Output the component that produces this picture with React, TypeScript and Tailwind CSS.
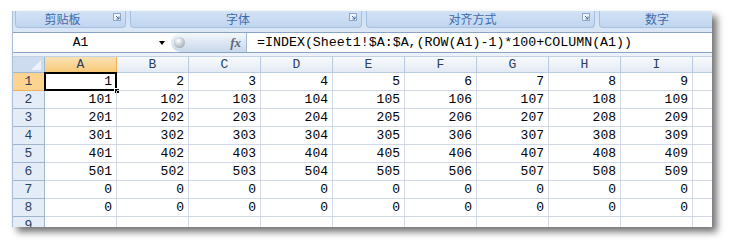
import React from 'react';

const COLS = ['A', 'B', 'C', 'D', 'E', 'F', 'G', 'H', 'I'];
const ROWS = [1, 2, 3, 4, 5, 6, 7, 8, 9];

const GROUPS = [
  { label: '剪贴板', w: 'w-[111px]', launcher: true },
  { label: '字体', w: 'w-[232px]', launcher: true },
  { label: '对齐方式', w: 'w-[229px]', launcher: true },
  { label: '数字', w: 'w-[132px]', launcher: true },
];

const mono = { fontFamily: '"Liberation Mono", "DejaVu Sans Mono", monospace' };

function cellValue(r: number, c: number) {
  if (r > 8) return '';
  if (r > 6) return '0';
  return String((r - 1) * 100 + c);
}

function Launcher() {
  return (
    <svg width="8" height="8" viewBox="0 0 8 8" className="mt-[2px]">
      <rect x="0.5" y="0.5" width="7" height="7" fill="#eef3fa" stroke="#8ea7c8" />
      <path d="M3 3 L6 6 M6 3.5 V6 H3.5" stroke="#4a6a95" strokeWidth="1" fill="none" />
    </svg>
  );
}

export default function App() {
  return (
    <div className="w-[731px] h-[247px] bg-white pl-[12px] pt-[11px]">
      <div className="w-[700px] h-[216px] overflow-hidden flex flex-col bg-[#d4e3f4] border-l border-[#a9bfdb] shadow-[5px_5px_7px_rgba(0,0,0,0.55)]">
        {/* ribbon group labels */}
        <div className="h-[21px] flex gap-[4px] pl-[2px] shrink-0 bg-gradient-to-b from-[#cfe0f4] to-[#dbe7f5]">
          {GROUPS.map((g) => (
            <div
              key={g.label}
              className={`${g.w} h-[17px] shrink-0 flex rounded-b-[4px] border-x border-b border-[#a6c0e0] bg-gradient-to-b from-[#d3e3f6] to-[#c0d5ef]`}
            >
              <span
                className="flex-1 text-center text-[12px] leading-[16px] text-[#3e6aaa]"
                style={{ fontFamily: '"Noto Sans CJK SC", sans-serif' }}
              >
                {g.label}
              </span>
              <span className="w-[16px] flex justify-center">{g.label !== '数字' && <Launcher />}</span>
            </div>
          ))}
        </div>

        {/* formula bar */}
        <div className="h-[21px] shrink-0 flex bg-white border-y border-[#8aa4c8]">
          <div className="w-[158px] flex items-center shrink-0">
            <span className="w-[135px] text-center text-[13px] text-black" style={mono}>
              A1
            </span>
            <span className="ml-[11px] w-0 h-0 border-l-[3.5px] border-r-[3.5px] border-t-[4px] border-l-transparent border-r-transparent border-t-black" />
          </div>
          <div className="w-[76px] shrink-0 flex items-center justify-between rounded-l-full border-r border-[#a3b8d4] bg-gradient-to-b from-[#f4f8fc] via-[#dde7f3] to-[#c8d8ec] pl-[3px] pr-[5px]">
            <span className="w-[11px] h-[11px] rounded-full bg-[radial-gradient(circle_at_40%_35%,#ffffff,#b8bec8_60%,#8e96a3)]" />
            <span
              className="text-[13px] italic font-bold text-[#5d6777] leading-none"
              style={{ fontFamily: '"Liberation Serif", serif' }}
            >
              fx
            </span>
          </div>
          <div className="flex items-center pl-[10px] text-[13.3px] text-black whitespace-nowrap" style={mono}>
            =INDEX(Sheet1!$A:$A,(ROW(A1)-1)*100+COLUMN(A1))
          </div>
        </div>

        <div className="h-[4px] shrink-0 bg-[#eef3f9] border-b border-[#c2d1e4]" />

        {/* sheet grid */}
        <div className="grid grid-cols-[32px_repeat(9,72px)_1fr] grid-rows-[16px_repeat(9,18px)] bg-white" style={mono}>
          <div className="relative border-r border-b border-[#9eb6ce] bg-[#cddcef]">
            <span className="absolute right-[3px] bottom-[2px] w-0 h-0 border-l-[10px] border-t-[10px] border-l-transparent border-t-transparent border-b-0 border-r-0 border-[#e9eef5]" style={{ borderRightColor: '#eef2f8', borderBottomColor: '#eef2f8', borderRightWidth: 0, borderBottomWidth: 10, borderLeftWidth: 10, borderTopWidth: 0, borderStyle: 'solid', borderLeftColor: 'transparent' }} />
          </div>
          {COLS.map((c) => (
            <div
              key={c}
              className={
                c === 'A'
                  ? 'flex items-center justify-center text-[13px] text-[#2a3f5c] border-r border-b border-r-[#f0b055] border-b-[#f29436] bg-gradient-to-b from-[#fbe2b4] to-[#f7c977]'
                  : 'flex items-center justify-center text-[13px] text-[#2a3f5c] border-r border-b border-[#b8cbe0] bg-gradient-to-b from-[#f9fbfd] to-[#e3eaf4]'
              }
            >
              {c}
            </div>
          ))}
          <div className="border-b border-[#b8cbe0] bg-gradient-to-b from-[#f9fbfd] to-[#e3eaf4]" />

          {ROWS.map((r) => (
            <React.Fragment key={r}>
              <div
                className={
                  r === 1
                    ? 'flex items-center justify-center text-[13px] text-[#2a3f5c] border-r border-b border-r-[#f29436] border-b-[#f0b055] bg-[#fcd48f]'
                    : 'flex items-center justify-center text-[13px] text-[#2a3f5c] border-r border-b border-[#9eb6ce] bg-[#e4ecf7]'
                }
              >
                {r}
              </div>
              {COLS.map((c, ci) => (
                <div
                  key={c}
                  className="relative flex items-center justify-end pr-[4px] text-[13px] text-black border-r border-b border-[#d0d7e5]"
                >
                  {cellValue(r, ci + 1)}
                  {r === 1 && ci === 0 && (
                    <>
                      <span className="absolute -left-[1px] -top-[1px] -right-[1px] -bottom-[1px] border-2 border-black" />
                      <span className="absolute -right-[4px] -bottom-[4px] w-[6px] h-[6px] bg-black border border-white" />
                    </>
                  )}
                </div>
              ))}
              <div className="border-b border-[#d0d7e5]" />
            </React.Fragment>
          ))}
        </div>
      </div>
    </div>
  );
}
